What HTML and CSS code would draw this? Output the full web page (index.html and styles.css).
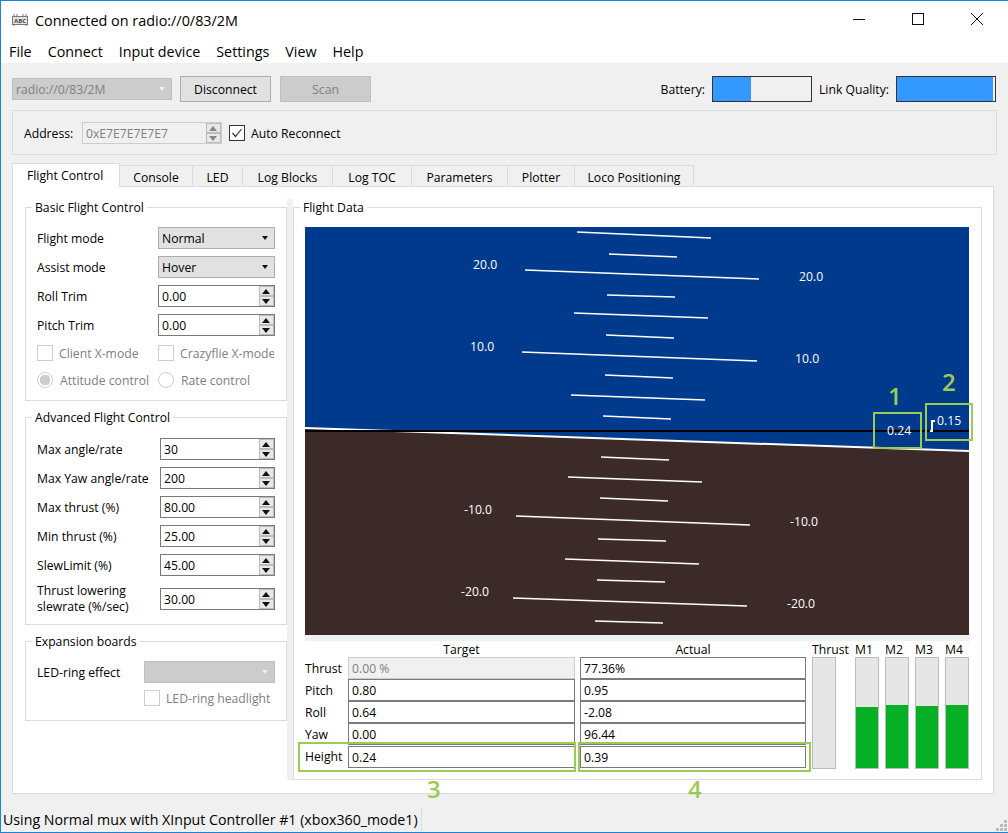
FILE: index.html
```html
<!DOCTYPE html>
<html lang="en">

<head>
  <meta charset="UTF-8">
  <title>Connected on radio://0/83/2M</title>
  <link rel="stylesheet" href="styles.css">
</head>

<body>
  <div class="window">

    <header class="titlebar">
      <svg class="appicon" width="16" height="12" viewBox="0 0 16 12">
        <rect x="0.5" y="2.5" width="15" height="8" fill="#e4e4e4" stroke="#777"/>
        <path d="M2 0v3M5 0v3M11 0v3M14 0v3M2 10v2M14 10v2" stroke="#777"/>
        <text x="8" y="9" class="appicon-text">ABC</text>
      </svg>
      <span class="wintitle">Connected on radio://0/83/2M</span>
      <div class="wincontrols">
        <svg width="12" height="12" viewBox="0 0 12 12"><path d="M0 6.500h12" stroke="#111"/></svg>
        <svg width="12" height="12" viewBox="0 0 12 12"><rect x="0.500" y="0.500" width="11" height="11" fill="none" stroke="#111"/></svg>
        <svg width="12" height="12" viewBox="0 0 12 12"><path d="M0 0l12 12M12 0l-12 12" stroke="#111"/></svg>
      </div>
    </header>

    <nav class="menubar">
      <span>File</span><span>Connect</span><span>Input device</span><span>Settings</span><span>View</span><span>Help</span>
    </nav>

    <div class="toolbar">
      <div class="combo combo-off combo-radio">radio://0/83/2M<i class="arrow"></i></div>
      <button class="btn">Disconnect</button>
      <button class="btn btn-off">Scan</button>
      <span class="tool-spacer"></span>
      <label class="bar-label">Battery:</label>
      <div class="hbar"><div class="hbar-fill battery-fill"></div></div>
      <label class="bar-label">Link Quality:</label>
      <div class="hbar"><div class="hbar-fill link-fill"></div></div>
    </div>

    <div class="addressbox">
      <label class="address-label">Address:</label>
      <div class="spin spin-off">0xE7E7E7E7E7
        <div class="spin-btns"><b class="up"></b><b class="down"></b></div>
      </div>
      <span class="check checked">
        <svg width="14" height="14" viewBox="0 0 14 14"><path d="M2.500 7l3 3.500 6-7.500" fill="none" stroke="#333" stroke-width="1.200"/></svg>
      </span>
      <label>Auto Reconnect</label>
    </div>

    <div class="tabs">
      <span class="tab active tab-flight">Flight Control</span>
      <span class="tab tab-console">Console</span>
      <span class="tab tab-led">LED</span>
      <span class="tab tab-blocks">Log Blocks</span>
      <span class="tab tab-toc">Log TOC</span>
      <span class="tab tab-params">Parameters</span>
      <span class="tab tab-plotter">Plotter</span>
      <span class="tab tab-loco">Loco Positioning</span>
    </div>

    <main class="pane">
      <div class="leftcol">

        <fieldset class="group basic">
          <legend>Basic Flight Control</legend>
          <div class="row row-combo"><label>Flight mode</label><div class="combo">Normal<i class="arrow dark"></i></div></div>
          <div class="row row-combo"><label>Assist mode</label><div class="combo">Hover<i class="arrow dark"></i></div></div>
          <div class="row"><label>Roll Trim</label><div class="spin">0.00<div class="spin-btns"><b class="up"></b><b class="down"></b></div></div></div>
          <div class="row"><label>Pitch Trim</label><div class="spin">0.00<div class="spin-btns"><b class="up"></b><b class="down"></b></div></div></div>
          <div class="row row-opts">
            <div class="opt"><span class="check"></span><span class="muted">Client X-mode</span></div>
            <div class="opt opt-clip"><span class="check"></span><span class="muted">Crazyflie X-mode</span></div>
          </div>
          <div class="row row-opts row-radio">
            <div class="opt"><span class="radio on"></span><span class="muted">Attitude control</span></div>
            <div class="opt"><span class="radio"></span><span class="muted">Rate control</span></div>
          </div>
        </fieldset>

        <fieldset class="group advanced">
          <legend>Advanced Flight Control</legend>
          <div class="row"><label>Max angle/rate</label><div class="spin">30<div class="spin-btns"><b class="up"></b><b class="down"></b></div></div></div>
          <div class="row"><label>Max Yaw angle/rate</label><div class="spin">200<div class="spin-btns"><b class="up"></b><b class="down"></b></div></div></div>
          <div class="row"><label>Max thrust (%)</label><div class="spin">80.00<div class="spin-btns"><b class="up"></b><b class="down"></b></div></div></div>
          <div class="row"><label>Min thrust (%)</label><div class="spin">25.00<div class="spin-btns"><b class="up"></b><b class="down"></b></div></div></div>
          <div class="row"><label>SlewLimit (%)</label><div class="spin">45.00<div class="spin-btns"><b class="up"></b><b class="down"></b></div></div></div>
          <div class="row row-tall"><label>Thrust lowering<br>slewrate (%/sec)</label><div class="spin">30.00<div class="spin-btns"><b class="up"></b><b class="down"></b></div></div></div>
        </fieldset>

        <fieldset class="group expansion">
          <legend>Expansion boards</legend>
          <div class="row row-led"><label>LED-ring effect</label><div class="combo combo-off"><i class="arrow"></i></div></div>
          <div class="row-headlight"><span class="check"></span><span class="muted">LED-ring headlight</span></div>
        </fieldset>
      </div>

      <div class="splitter"></div>

      <fieldset class="group flightdata">
        <legend>Flight Data</legend>

        <svg class="horizon" width="664" height="408" viewBox="305 227 664 408">
          <rect x="305" y="227" width="664" height="408" fill="#003a8c"/>
          <polygon points="305,428 969,451 969,635 305,635" fill="#3c2a28"/>
          <line x1="305" y1="428" x2="969" y2="451" stroke="#fff" stroke-width="2"/>
          <line x1="305" y1="431" x2="969" y2="431" stroke="#000" stroke-width="2"/>
          <g stroke="#fff" stroke-width="1.500">
            <line x1="577" y1="232" x2="711" y2="238"/>
            <line x1="609" y1="254" x2="677" y2="257"/>
            <line x1="525" y1="270" x2="759" y2="279"/>
            <line x1="607" y1="295" x2="675" y2="297"/>
            <line x1="574" y1="313" x2="708" y2="318"/>
            <line x1="606" y1="335" x2="674" y2="338"/>
            <line x1="522" y1="352" x2="757" y2="361"/>
            <line x1="605" y1="375" x2="673" y2="378"/>
            <line x1="571" y1="395" x2="705" y2="400"/>
            <line x1="603" y1="416" x2="671" y2="419"/>
            <line x1="601" y1="457" x2="669" y2="460"/>
            <line x1="568" y1="477" x2="702" y2="482"/>
            <line x1="600" y1="498" x2="668" y2="501"/>
            <line x1="516" y1="516" x2="750" y2="525"/>
            <line x1="598" y1="539" x2="666" y2="541"/>
            <line x1="565" y1="559" x2="699" y2="564"/>
            <line x1="597" y1="580" x2="665" y2="582"/>
            <line x1="513" y1="598" x2="747" y2="606"/>
            <line x1="595" y1="621" x2="663" y2="623"/>
          </g>
          <g class="horizon-text">
            <text x="473" y="269">20.0</text>
            <text x="799" y="281">20.0</text>
            <text x="470" y="351">10.0</text>
            <text x="795" y="363">10.0</text>
            <text x="464" y="514">-10.0</text>
            <text x="790" y="526">-10.0</text>
            <text x="461" y="596">-20.0</text>
            <text x="787" y="608">-20.0</text>
            <text x="887" y="435">0.24</text>
            <text x="937" y="425">0.15</text>
          </g>
          <path d="M930 431h2v-10h3" fill="none" stroke="#fff" stroke-width="2"/>
        </svg>
        <div class="horizon-gap"></div>

        <div class="datagrid">
          <div class="fields">
            <div class="fields-head"><span></span><span>Target</span><span class="actual-head">Actual</span></div>
            <div class="field-row"><label>Thrust</label><div class="field field-off">0.00 %</div><div class="field">77.36%</div></div>
            <div class="field-row"><label>Pitch</label><div class="field">0.80</div><div class="field">0.95</div></div>
            <div class="field-row"><label>Roll</label><div class="field">0.64</div><div class="field">-2.08</div></div>
            <div class="field-row"><label>Yaw</label><div class="field">0.00</div><div class="field">96.44</div></div>
            <div class="field-row field-last"><label>Height</label><div class="field">0.24</div><div class="field">0.39</div></div>
          </div>
          <div class="vbars">
            <div class="vbar-col col-thrust"><span>Thrust</span><div class="vbar"></div></div>
            <div class="vbar-col"><span>M1</span><div class="vbar"><div class="vbar-fill" style="height: 61px"></div></div></div>
            <div class="vbar-col"><span>M2</span><div class="vbar"><div class="vbar-fill" style="height: 63px"></div></div></div>
            <div class="vbar-col"><span>M3</span><div class="vbar"><div class="vbar-fill" style="height: 62px"></div></div></div>
            <div class="vbar-col"><span>M4</span><div class="vbar"><div class="vbar-fill" style="height: 63px"></div></div></div>
          </div>
        </div>
      </fieldset>
    </main>

    <footer class="statusbar">
      <span class="status-msg">Using Normal mux with XInput Controller #1 (xbox360_mode1)</span>
      <svg class="grip" width="11" height="11" viewBox="0 0 11 11" fill="#bbb">
        <rect x="8" y="0" width="3" height="3"/><rect x="4" y="4" width="3" height="3"/><rect x="8" y="4" width="3" height="3"/>
        <rect x="0" y="8" width="3" height="3"/><rect x="4" y="8" width="3" height="3"/><rect x="8" y="8" width="3" height="3"/>
      </svg>
    </footer>

    <!-- green callouts drawn over the screenshot -->
    <div class="mark mark-1"></div><span class="mark-num num-1">1</span>
    <div class="mark mark-2"></div><span class="mark-num num-2">2</span>
    <div class="mark mark-3"></div><span class="mark-num num-3">3</span>
    <div class="mark mark-4"></div><span class="mark-num num-4">4</span>
  </div>
</body>
</html>
```

FILE: styles.css
```css
* {
  box-sizing: border-box;
}

body {
  margin: 0;
  font-family: 'Open Sans', 'Noto Sans', sans-serif;
  font-size: 12.2px;
  color: #000;
  background-color: #f0f0f0;
}

.window {
  position: relative;
  width: 1008px;
  height: 833px;
  overflow: hidden;
  display: flex;
  flex-direction: column;
  background-color: #f0f0f0;
  border-top: 1px solid #1883d7;
  border-left: 1px solid #1883d7;
  border-bottom: 1px solid #1883d7;
}

/* title + menu */
.titlebar {
  height: 40px;
  flex: none;
  display: flex;
  align-items: center;
  background-color: #fff;
  padding: 0 0 2px 11px;
}

.appicon {
  margin-right: 7px;
}

.appicon-text {
  font-size: 6px;
  font-weight: 700;
  text-anchor: middle;
  fill: #444;
}

.wintitle {
  font-size: 14.4px;
}

.wincontrols {
  margin-left: auto;
  display: flex;
  gap: 47px;
  padding-right: 25px;
  margin-top: -2px;
}

.menubar {
  height: 22px;
  flex: none;
  display: flex;
  gap: 16px;
  padding-left: 8px;
  background-color: #fff;
  font-size: 14.3px;
  line-height: 22px;
}

/* connection row */
.toolbar {
  height: 47px;
  flex: none;
  display: flex;
  align-items: center;
  padding: 5px 12px 0 11px;
}

.combo {
  position: relative;
  width: 117px;
  height: 22px;
  line-height: 22px;
  padding-left: 3px;
  background-color: #e1e1e1;
  border: 1px solid #adadad;
}

.combo-off {
  background-color: #ccc;
  color: #808080;
  border-color: #bfbfbf;
}

.combo-radio {
  width: 160px;
  margin-right: 8px;
}

.arrow {
  position: absolute;
  right: 6px;
  top: 8px;
  border-left: 3.500px solid transparent;
  border-right: 3.500px solid transparent;
  border-top: 4px solid #f0f0f0;
}

.arrow.dark {
  border-top-color: #111;
}

.btn {
  width: 91px;
  height: 26px;
  margin-right: 9px;
  padding: 0;
  font: inherit;
  color: #000;
  background-color: #e1e1e1;
  border: 1px solid #adadad;
}

.btn-off {
  background-color: #ccc;
  color: #808080;
  border-color: #bfbfbf;
}

.tool-spacer {
  flex: 1;
}

.bar-label {
  margin-right: 7px;
}

.hbar {
  width: 100px;
  height: 26px;
  margin-right: 7px;
  border: 1px solid #333;
  background-color: #f0f0f0;
}

.hbar:last-child {
  margin-right: 0;
}

.hbar-fill {
  height: 100%;
  background-color: #3399ff;
}

.battery-fill {
  width: 38px;
}

.link-fill {
  width: 96px;
}

/* address */
.addressbox {
  height: 45px;
  flex: none;
  margin: 0 11px;
  padding: 1px 0 0 11px;
  display: flex;
  align-items: center;
  border: 1px solid #dcdcdc;
}

.address-label {
  width: 58px;
}

.spin {
  position: relative;
  width: 117px;
  height: 22px;
  line-height: 22px;
  padding-left: 3px;
  background-color: #fff;
  border: 1px solid #7a7a7a;
}

.addressbox .spin {
  width: 140px;
  margin-right: 7px;
}

.spin-off {
  background-color: #f0f0f0;
  border-color: #ccc;
  color: #808080;
}

.spin-btns {
  position: absolute;
  right: 0;
  top: 0;
  width: 15px;
  height: 20px;
  display: flex;
  flex-direction: column;
  background-color: #fff;
}

.spin-off .spin-btns {
  background-color: #f0f0f0;
}

.spin-btns b {
  flex: 1;
  display: block;
  position: relative;
  background-color: #e8e8e8;
  border: 1px solid #bbb;
}

.spin-btns b::after {
  content: "";
  position: absolute;
  left: 2px;
  border-left: 4px solid transparent;
  border-right: 4px solid transparent;
}

.spin-btns .up::after {
  top: 2px;
  border-bottom: 5px solid #111;
}

.spin-btns .down::after {
  top: 2px;
  border-top: 5px solid #111;
}

.spin-off .spin-btns .up::after {
  border-bottom-color: #888;
}

.spin-off .spin-btns .down::after {
  border-top-color: #888;
}

.check {
  display: inline-flex;
  align-items: center;
  justify-content: center;
  flex: none;
  width: 16px;
  height: 16px;
  margin-right: 6px;
  border: 1px solid #ccc;
  background-color: #fff;
}

.check.checked {
  border-color: #333;
}

.radio {
  display: inline-block;
  flex: none;
  width: 16px;
  height: 16px;
  margin-right: 7px;
  border: 1px solid #ccc;
  border-radius: 50%;
  background-color: #fff;
}

.radio.on {
  background: radial-gradient(circle, #ccc 0 5px, #fff 5.500px);
}

.muted {
  color: #808080;
}

/* tabs */
.tabs {
  height: 21px;
  flex: none;
  display: flex;
  align-items: flex-end;
  margin: 10px 0 0 11px;
  position: relative;
  z-index: 1;
}

.tab {
  height: 21px;
  line-height: 23px;
  text-align: center;
  border: 1px solid #dcdcdc;
  border-left: 0;
  border-bottom: 0;
}

.tab.active {
  height: 24px;
  line-height: 24px;
  background-color: #fff;
  border-left: 1px solid #dcdcdc;
  margin-bottom: -1px;
  text-align: left;
  padding-left: 14px;
}

.tab-flight { width: 108px; }
.tab-console { width: 73px; }
.tab-led { width: 50px; }
.tab-blocks { width: 90px; }
.tab-toc { width: 79px; }
.tab-params { width: 96px; }
.tab-plotter { width: 67px; }
.tab-loco { width: 119px; }

/* main pane */
.pane {
  width: 982px;
  height: 608px;
  flex: none;
  margin-left: 11px;
  padding: 4px 11px 0 12px;
  display: flex;
  align-items: flex-start;
  background-color: #fff;
  border: 1px solid #dcdcdc;
}

.leftcol {
  width: 262px;
  flex: none;
  display: flex;
  flex-direction: column;
}

.splitter {
  width: 6px;
  height: 581px;
  margin-top: 8px;
  flex: none;
  background-color: #f0f0f0;
}

.group {
  margin: 8px 0 0;
  padding: 0;
  min-width: 0;
  border: 1px solid #dcdcdc;
}

.group legend {
  margin-left: 6px;
  padding: 0 3px;
  height: 16px;
  line-height: 18px;
}

.row {
  display: flex;
  align-items: center;
  justify-content: space-between;
  height: 22px;
  margin: 0 11px 7px;
}

.basic {
  height: 202px;
  padding-top: 12px;
}

.advanced {
  height: 216px;
  padding-top: 13px;
}

.advanced .spin {
  width: 115px;
}

.row-tall {
  height: 22px;
  margin-top: 12px;
  margin-bottom: 0;
}

.row-tall label {
  line-height: 16px;
}

.row-opts {
  justify-content: flex-start;
  height: 16px;
  margin-top: 9px;
  margin-bottom: 11px;
}

.row-radio {
  margin-bottom: 0;
}

.opt {
  display: flex;
  align-items: center;
  width: 121px;
  white-space: nowrap;
  overflow: hidden;
  flex: none;
}

.opt-clip {
  width: 116px;
}

.expansion {
  height: 88px;
  padding-top: 12px;
}

.row-led .combo {
  width: 131px;
}

.row-headlight {
  display: flex;
  align-items: center;
  height: 16px;
  margin: 4px 0 0 118px;
}

.flightdata {
  width: 689px;
  height: 581px;
  padding: 12px 11px 0 11px;
  flex: none;
}

.flightdata legend {
  margin-left: -5px;
}

.horizon {
  display: block;
}

.horizon-text text {
  fill: #fff;
}

.horizon-gap {
  height: 6px;
  background-color: #f0f0f0;
}

.datagrid {
  display: flex;
  height: 134px;
}

.fields {
  width: 501px;
  flex: none;
}

.fields-head {
  display: grid;
  grid-template-columns: 43px 227px 231px;
  height: 16px;
  line-height: 17px;
  text-align: center;
}

.actual-head {
  padding-left: 5px;
}

.field-row {
  display: grid;
  grid-template-columns: 43px 227px 231px;
  height: 22px;
  align-items: start;
}

.field-row label {
  line-height: 24px;
}

.field-last label {
  line-height: 22px;
}

.field-last {
  margin-top: 1px;
}

.field {
  height: 22px;
  line-height: 22px;
  padding-left: 3px;
  background-color: #fff;
  border: 1px solid #7a7a7a;
}

.field + .field {
  margin-left: 5px;
}

.field-off {
  background-color: #f0f0f0;
  border-color: #ccc;
  color: #808080;
}

.vbars {
  display: flex;
  margin-left: 6px;
  gap: 6px;
}

.vbar-col {
  width: 24px;
}

.col-thrust {
  margin-right: 13px;
}

.vbar-col span {
  display: block;
  height: 16px;
  line-height: 17px;
  white-space: nowrap;
}

.vbar {
  position: relative;
  width: 24px;
  height: 112px;
  background-color: #e6e6e6;
  border: 1px solid #bcbcbc;
}

.vbar-fill {
  position: absolute;
  left: 0;
  right: 0;
  bottom: 0;
  background-color: #06b025;
}

/* status */
.statusbar {
  flex: 1;
  position: relative;
  display: flex;
  align-items: flex-end;
}

.status-msg {
  display: block;
  height: 24px;
  line-height: 23px;
  padding: 0 3px 0 2px;
  font-size: 14.2px;
  border-right: 1px solid #dcdcdc;
}

.grip {
  position: absolute;
  right: 1px;
  bottom: 1px;
}

/* callouts */
.mark {
  position: absolute;
  border: 2px solid #9ccb55;
}

.mark-1 { left: 872px; top: 411px; width: 49px; height: 37px; }
.mark-2 { left: 924px; top: 402px; width: 48px; height: 38px; }
.mark-3 { left: 297px; top: 741px; width: 278px; height: 30px; }
.mark-4 { left: 577px; top: 741px; width: 233px; height: 30px; }

.mark-num {
  position: absolute;
  font-size: 24px;
  font-weight: 600;
  line-height: 24px;
  color: #9ccb55;
}

.num-1 { left: 887px; top: 383px; }
.num-2 { left: 941px; top: 369px; }
.num-3 { left: 426px; top: 776px; }
.num-4 { left: 687px; top: 776px; }
```
